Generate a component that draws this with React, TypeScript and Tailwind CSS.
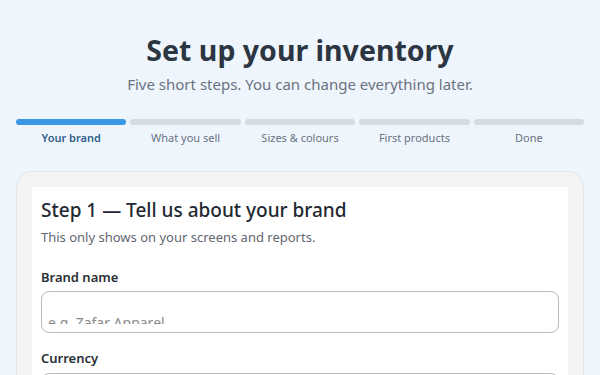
import React from "react";

const steps = ["Your brand", "What you sell", "Sizes & colours", "First products", "Done"];

export default function App() {
  const current = 0;

  return (
    <div className="min-h-screen bg-[#eff5fd] px-4 pt-[30px] text-[#2d3540]" style={{ fontFamily: '"Noto Sans", "Open Sans", sans-serif' }}>
      {/* Header */}
      <div className="text-center">
        <h1 className="text-[28.5px] font-bold leading-[40px] text-[#2c3542]">Set up your inventory</h1>
        <p className="mt-[3px] text-[15px] leading-[22px] text-[#6b7280]">Five short steps. You can change everything later.</p>
      </div>

      {/* Progress */}
      <div className="mt-[24px] flex gap-[4px]">
        {steps.map((label, i) => (
          <div key={label} className="flex flex-1 flex-col items-center">
            <div className={`h-[6px] w-full rounded-full ${i === current ? "bg-[#3b97e3]" : "bg-[#d5dbe3]"}`} />
            <span className={`mt-[5px] text-[11px] leading-[16px] ${i === current ? "font-semibold text-[#2f5f8a]" : "text-[#6b7280]"}`}>
              {label}
            </span>
          </div>
        ))}
      </div>

      {/* Card */}
      <div className="mt-[25px] rounded-[16px] border border-[#e3e5e8] bg-[#f3f3f3] px-[15px] pt-[15px]">
        <div className="bg-white px-[9px] pt-[8px] pb-4">
          <h2 className="text-[19px] font-medium leading-[30px] text-[#222831]">Step 1 — Tell us about your brand</h2>
          <p className="mt-[3px] text-[13px] leading-[18px] text-[#5f6672]">This only shows on your screens and reports.</p>

          <label className="mt-[22px] block text-[13px] font-semibold leading-[18px] text-[#2a2f36]">Brand name</label>
          <div className="mt-[5px] h-[42px] rounded-[8px] border border-[#bdbdbd] px-[6px] pb-[8px]">
            <div className="h-full overflow-hidden">
              <div className="pt-[22px] text-[14px] leading-[18px] text-[#8a8a8a]">e.g. Zafar Apparel</div>
            </div>
          </div>

          <label className="mt-[16px] block text-[13px] font-semibold leading-[18px] text-[#2a2f36]">Currency</label>
          <div className="mt-[6px] h-[42px] rounded-[8px] border border-[#bdbdbd]" />
        </div>
      </div>
    </div>
  );
}
